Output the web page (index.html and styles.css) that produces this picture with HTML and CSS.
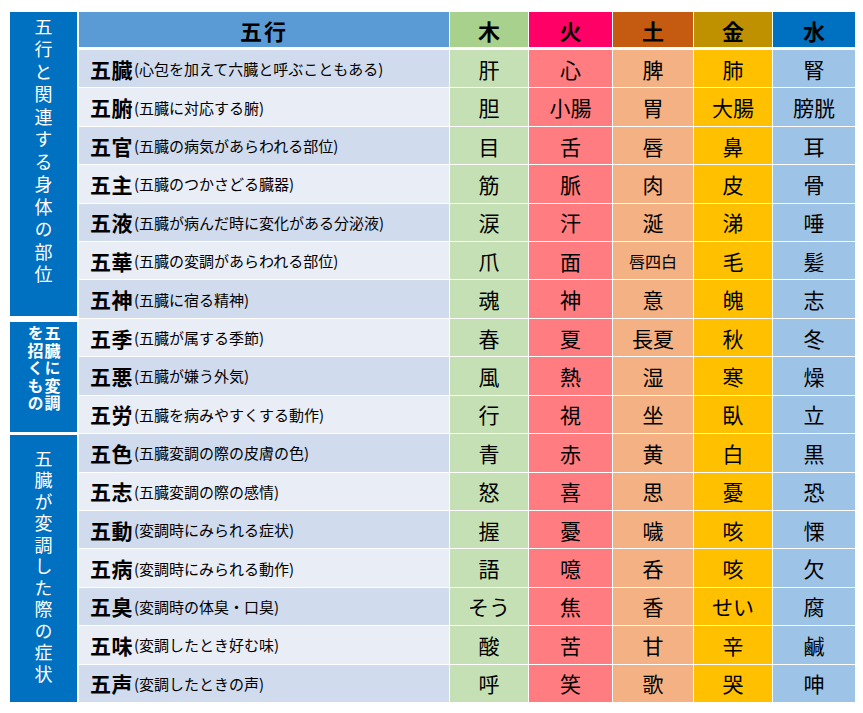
FILE: index.html
```html
<!DOCTYPE html>
<html lang="ja">
<head>
<meta charset="utf-8">
<title>五行</title>
<link rel="stylesheet" href="styles.css">
</head>
<body>
<div class="table">
  <div class="group g1"><span class="vtext">五行と関連する身体の部位</span></div>
  <div class="hd hd-label">五行</div>
  <div class="hd hd-wood">木</div>
  <div class="hd hd-fire">火</div>
  <div class="hd hd-earth">土</div>
  <div class="hd hd-metal">金</div>
  <div class="hd hd-water">水</div>

  <div class="lbl dark"><b>五臓</b><small>(心包を加えて六臓と呼ぶこともある)</small></div>
  <div class="c wood">肝</div><div class="c fire">心</div><div class="c earth">脾</div><div class="c metal">肺</div><div class="c water">腎</div>

  <div class="lbl light"><b>五腑</b><small>(五臓に対応する腑)</small></div>
  <div class="c wood">胆</div><div class="c fire">小腸</div><div class="c earth">胃</div><div class="c metal">大腸</div><div class="c water">膀胱</div>

  <div class="lbl dark"><b>五官</b><small>(五臓の病気があらわれる部位)</small></div>
  <div class="c wood">目</div><div class="c fire">舌</div><div class="c earth">唇</div><div class="c metal">鼻</div><div class="c water">耳</div>

  <div class="lbl light"><b>五主</b><small>(五臓のつかさどる臓器)</small></div>
  <div class="c wood">筋</div><div class="c fire">脈</div><div class="c earth">肉</div><div class="c metal">皮</div><div class="c water">骨</div>

  <div class="lbl dark"><b>五液</b><small>(五臓が病んだ時に変化がある分泌液)</small></div>
  <div class="c wood">涙</div><div class="c fire">汗</div><div class="c earth">涎</div><div class="c metal">涕</div><div class="c water">唾</div>

  <div class="lbl light"><b>五華</b><small>(五臓の変調があらわれる部位)</small></div>
  <div class="c wood">爪</div><div class="c fire">面</div><div class="c earth sm">唇四白</div><div class="c metal">毛</div><div class="c water">髪</div>

  <div class="lbl dark"><b>五神</b><small>(五臓に宿る精神)</small></div>
  <div class="c wood">魂</div><div class="c fire">神</div><div class="c earth">意</div><div class="c metal">魄</div><div class="c water">志</div>

  <div class="group g2"><span class="vrl">五臓に変調<br>を招くもの</span></div>
  <div class="lbl light"><b>五季</b><small>(五臓が属する季節)</small></div>
  <div class="c wood">春</div><div class="c fire">夏</div><div class="c earth">長夏</div><div class="c metal">秋</div><div class="c water">冬</div>

  <div class="lbl dark"><b>五悪</b><small>(五臓が嫌う外気)</small></div>
  <div class="c wood">風</div><div class="c fire">熱</div><div class="c earth">湿</div><div class="c metal">寒</div><div class="c water">燥</div>

  <div class="lbl light"><b>五労</b><small>(五臓を病みやすくする動作)</small></div>
  <div class="c wood">行</div><div class="c fire">視</div><div class="c earth">坐</div><div class="c metal">臥</div><div class="c water">立</div>

  <div class="group g3"><span class="vtext">五臓が変調した際の症状</span></div>
  <div class="lbl dark"><b>五色</b><small>(五臓変調の際の皮膚の色)</small></div>
  <div class="c wood">青</div><div class="c fire">赤</div><div class="c earth">黄</div><div class="c metal">白</div><div class="c water">黒</div>

  <div class="lbl light"><b>五志</b><small>(五臓変調の際の感情)</small></div>
  <div class="c wood">怒</div><div class="c fire">喜</div><div class="c earth">思</div><div class="c metal">憂</div><div class="c water">恐</div>

  <div class="lbl dark"><b>五動</b><small>(変調時にみられる症状)</small></div>
  <div class="c wood">握</div><div class="c fire">憂</div><div class="c earth">噦</div><div class="c metal">咳</div><div class="c water">慄</div>

  <div class="lbl light"><b>五病</b><small>(変調時にみられる動作)</small></div>
  <div class="c wood">語</div><div class="c fire">噫</div><div class="c earth">呑</div><div class="c metal">咳</div><div class="c water">欠</div>

  <div class="lbl dark"><b>五臭</b><small>(変調時の体臭・口臭)</small></div>
  <div class="c wood">そう</div><div class="c fire">焦</div><div class="c earth">香</div><div class="c metal">せい</div><div class="c water">腐</div>

  <div class="lbl light"><b>五味</b><small>(変調したとき好む味)</small></div>
  <div class="c wood">酸</div><div class="c fire">苦</div><div class="c earth">甘</div><div class="c metal">辛</div><div class="c water">鹹</div>

  <div class="lbl dark"><b>五声</b><small>(変調したときの声)</small></div>
  <div class="c wood">呼</div><div class="c fire">笑</div><div class="c earth">歌</div><div class="c metal">哭</div><div class="c water">呻</div>
</div>
</body>
</html>
```

FILE: styles.css
```css
html, body {
  margin: 0;
  padding: 0;
  background: #ffffff;
}

body {
  font-family: "Noto Sans CJK JP", "Noto Sans", sans-serif;
  color: #000;
}

.table {
  margin: 12px 0 0 10px;
  width: 845px;
  height: 690px;
  display: grid;
  grid-template-columns: 68px 370px 78px 83px 80px 78px 82px;
  grid-template-rows: 37px repeat(17, 1fr);
  gap: 1px;
  background: #ffffff;
}

.group {
  background: #0070c0;
  color: #ffffff;
  margin-right: 1px;
  display: flex;
  justify-content: center;
}

.g1 {
  grid-row: 1 / span 8;
  margin-bottom: 2px;
  padding-top: 6px;
}

.g2 {
  grid-row: 9 / span 3;
  margin-top: 3px;
  margin-bottom: 1px;
  padding-top: 3px;
}

.g3 {
  grid-row: 12 / span 7;
  margin-top: 1px;
  align-items: center;
}

.vtext {
  writing-mode: vertical-rl;
  text-orientation: upright;
  font-size: 18px;
  letter-spacing: 4.5px;
  line-height: 1;
}

.g3 .vtext {
  letter-spacing: 3.5px;
}

.vrl {
  writing-mode: vertical-rl;
  text-orientation: upright;
  font-size: 16px;
  font-weight: bold;
  line-height: 17px;
  letter-spacing: 1.5px;
  white-space: nowrap;
}

.hd {
  display: flex;
  align-items: center;
  justify-content: center;
  font-size: 22px;
  font-weight: bold;
  border-bottom: 2px solid #ffffff;
  padding-top: 1px;
}

.hd-label { background: #5b9bd5; letter-spacing: 2px; }
.hd-wood { background: #a9d18e; }
.hd-fire { background: #ff0066; }
.hd-earth { background: #c55a11; }
.hd-metal { background: #bf9000; }
.hd-water { background: #0070c0; }

.lbl {
  display: flex;
  align-items: center;
  padding-left: 11px;
  white-space: nowrap;
}

.lbl b {
  font-size: 21px;
  font-weight: bold;
  letter-spacing: 0.5px;
}

.lbl small {
  font-size: 15px;
  margin-left: 1px;
}

.dark { background: #d0dbee; }
.light { background: #e9edf6; }

.c {
  display: flex;
  align-items: center;
  justify-content: center;
  font-size: 21px;
}

.c.sm {
  font-size: 16px;
}

.wood { background: #c5e0b4; }
.fire { background: #ff7c80; }
.earth { background: #f4b183; }
.metal { background: #ffc000; }
.water { background: #9dc3e6; }
```
